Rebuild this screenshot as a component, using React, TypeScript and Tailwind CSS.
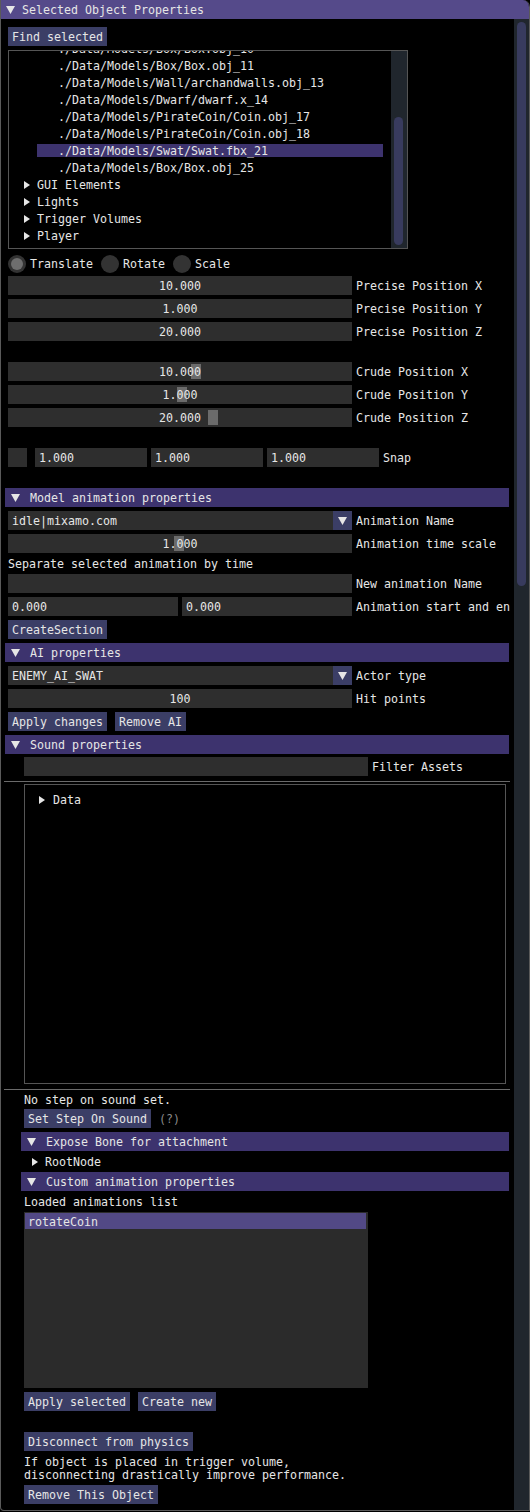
import React from "react";

const FONT = "font-['DejaVu_Sans_Mono',monospace] text-[11.63px] leading-[13px] text-[#e6e6e6] [&_span]:pt-[2px]";

function Down({ className = "" }: { className?: string }) {
  return (
    <svg width="9" height="8" viewBox="0 0 9 8" className={className}>
      <path d="M0 0H9L4.5 8Z" fill="#e6e6e6" />
    </svg>
  );
}

function Right({ className = "" }: { className?: string }) {
  return (
    <svg width="6" height="8" viewBox="0 0 6 8" className={className}>
      <path d="M0 0L6 4L0 8Z" fill="#e6e6e6" />
    </svg>
  );
}

function Header({ label, w = "w-[504px]", mt = "mt-[4px]" }: { label: string; w?: string; mt?: string }) {
  return (
    <div className={`h-[19px] bg-[#3d336e] flex items-center -ml-[3px] shrink-0 ${w} ${mt}`}>
      <Down className="ml-[6px]" />
      <span className="ml-[10px] whitespace-nowrap">{label}</span>
    </div>
  );
}

function Btn({ children, className = "" }: { children: React.ReactNode; className?: string }) {
  return (
    <div className={`h-[19px] px-[4px] bg-[#3b3e66] flex items-center whitespace-nowrap shrink-0 ${className}`}>
      <span>{children}</span>
    </div>
  );
}

function Frame({
  w = "w-[344px]",
  children,
  center = false,
  grab,
  combo = false,
}: {
  w?: string;
  children?: React.ReactNode;
  center?: boolean;
  grab?: number;
  combo?: boolean;
}) {
  return (
    <div className={`relative h-[19px] bg-[#2e2e2e] flex items-center shrink-0 ${w} ${center ? "justify-center" : "pl-[4px]"}`}>
      {grab !== undefined && (
        <div className="absolute top-[2px] h-[15px] w-[10px] bg-[#6b6b6b]" style={{ left: grab }} />
      )}
      <span className="relative whitespace-nowrap">{children}</span>
      {combo && (
        <div className="absolute right-0 top-0 h-[19px] w-[19px] bg-[#3b3e66] flex items-center justify-center">
          <Down />
        </div>
      )}
    </div>
  );
}

function Row({
  value,
  label,
  center = true,
  grab,
  combo = false,
  mt = "mt-[4px]",
}: {
  value: string;
  label: string;
  center?: boolean;
  grab?: number;
  combo?: boolean;
  mt?: string;
}) {
  return (
    <div className={`flex items-center h-[19px] shrink-0 ${mt}`}>
      <Frame center={center} grab={grab} combo={combo}>
        {value}
      </Frame>
      <span className="ml-[4px] whitespace-nowrap">{label}</span>
    </div>
  );
}

function Radio({ label, on = false }: { label: string; on?: boolean }) {
  return (
    <div className="flex items-center gap-[4px]">
      <div className="w-[18px] h-[18px] rounded-full bg-[#333333] flex items-center justify-center">
        {on && <div className="w-[12px] h-[12px] rounded-full bg-[#6e6e6e]" />}
      </div>
      <span>{label}</span>
    </div>
  );
}

const files = [
  "./Data/Models/Box/Box.obj_10",
  "./Data/Models/Box/Box.obj_11",
  "./Data/Models/Wall/archandwalls.obj_13",
  "./Data/Models/Dwarf/dwarf.x_14",
  "./Data/Models/PirateCoin/Coin.obj_17",
  "./Data/Models/PirateCoin/Coin.obj_18",
  "./Data/Models/Swat/Swat.fbx_21",
  "./Data/Models/Box/Box.obj_25",
];

const groups = ["GUI Elements", "Lights", "Trigger Volumes", "Player"];

export default function App() {
  return (
    <div className={`w-[530px] h-[1512px] bg-black overflow-hidden ${FONT}`}>
      <div className="w-[530px] h-[1511px] flex flex-col border-x border-b border-[#5a5a5a] rounded-tr-[7px] rounded-bl-[4px] overflow-hidden">
        {/* title */}
        <div className="h-[19px] bg-[#554a8a] flex items-center shrink-0 -mx-[1px]">
          <Down className="ml-[6px]" />
          <span className="ml-[7px]">Selected Object Properties</span>
        </div>
        <div className="flex flex-1 min-h-0">
          {/* content */}
          <div className="w-[513px] pl-[3px] flex flex-col">
            <div className="w-[506px] pl-[4px] overflow-hidden flex flex-col">
              <Btn className="mt-[8px] self-start">Find selected</Btn>

              {/* tree list */}
              <div className="mt-[4px] w-[400px] h-[199px] border border-[#555555] flex shrink-0">
                <div className="flex-1 overflow-hidden">
                  <div className="-mt-[9px] flex flex-col gap-[4px]">
                    {files.map((f, i) => (
                      <div
                        key={f}
                        className={`ml-[28px] mr-[8px] h-[13px] pl-[21px] pt-[1px] whitespace-nowrap ${i === 6 ? "bg-[#3d336e]" : ""}`}
                      >
                        {f}
                      </div>
                    ))}
                    {groups.map((g) => (
                      <div key={g} className="h-[13px] flex items-center pl-[15px]">
                        <Right />
                        <span className="ml-[7px]">{g}</span>
                      </div>
                    ))}
                  </div>
                </div>
                <div className="w-[16px] bg-[#20262d] flex flex-col">
                  <div className="mt-[66px] ml-[3px] w-[9px] h-[128px] rounded-full bg-[#383b5e]" />
                </div>
              </div>

              {/* radios */}
              <div className="mt-[5px] h-[19px] flex items-center gap-[8px] shrink-0">
                <Radio label="Translate" on />
                <Radio label="Rotate" />
                <Radio label="Scale" />
              </div>

              <Row value="10.000" label="Precise Position X" mt="mt-[3px]" />
              <Row value="1.000" label="Precise Position Y" />
              <Row value="20.000" label="Precise Position Z" />

              <Row value="10.000" label="Crude Position X" grab={183} mt="mt-[21px]" />
              <Row value="1.000" label="Crude Position Y" grab={169} />
              <Row value="20.000" label="Crude Position Z" grab={200} />

              <div className="mt-[21px] h-[19px] flex items-center shrink-0">
                <div className="w-[19px] h-[19px] bg-[#2e2e2e]" />
                <div className="ml-[8px]">
                  <Frame w="w-[112px]">1.000</Frame>
                </div>
                <div className="ml-[4px]">
                  <Frame w="w-[112px]">1.000</Frame>
                </div>
                <div className="ml-[4px]">
                  <Frame w="w-[112px]">1.000</Frame>
                </div>
                <span className="ml-[4px]">Snap</span>
              </div>

              <Header label="Model animation properties" mt="mt-[21px]" />
              <Row value="idle|mixamo.com" label="Animation Name" center={false} combo />
              <Row value="1.000" label="Animation time scale" grab={166} />
              <div className="mt-[4px] h-[13px] pt-[1px] whitespace-nowrap shrink-0">Separate selected animation by time</div>
              <Row value="" label="New animation Name" />
              <div className="mt-[4px] h-[19px] flex items-center shrink-0">
                <Frame w="w-[170px]">0.000</Frame>
                <div className="ml-[4px]">
                  <Frame w="w-[170px]">0.000</Frame>
                </div>
                <span className="ml-[4px] whitespace-nowrap">Animation start and end</span>
              </div>
              <Btn className="mt-[4px] self-start">CreateSection</Btn>

              <Header label="AI properties" />
              <Row value="ENEMY_AI_SWAT" label="Actor type" center={false} combo />
              <Row value="100" label="Hit points" />
              <div className="mt-[4px] flex gap-[8px] shrink-0">
                <Btn>Apply changes</Btn>
                <Btn>Remove AI</Btn>
              </div>

              <Header label="Sound properties" />
              <div className="pl-[16px] flex flex-col">
                <div className="mt-[3px] h-[19px] flex items-center shrink-0">
                  <Frame />
                  <span className="ml-[4px]">Filter Assets</span>
                </div>
              </div>
              <div className="mt-[5px] -ml-[4px] w-[506px] h-[1px] bg-[#6a6a6a] shrink-0" />
              <div className="pl-[16px] flex flex-col">
                <div className="mt-[2px] w-[482px] h-[300px] border border-[#555555] shrink-0 pt-[8px]">
                  <div className="h-[13px] flex items-center pl-[14px]">
                    <Right />
                    <span className="ml-[8px]">Data</span>
                  </div>
                </div>
              </div>
              <div className="mt-[5px] -ml-[4px] w-[506px] h-[1px] bg-[#6a6a6a] shrink-0" />
              <div className="pl-[16px] flex flex-col">
                <div className="mt-[3px] h-[13px] pt-[1px] whitespace-nowrap">No step on sound set.</div>
                <div className="mt-[3px] flex items-center">
                  <Btn>Set Step On Sound</Btn>
                  <span className="ml-[8px] text-[#8a8a8a]">(?)</span>
                </div>
                <Header label="Expose Bone for attachment" w="w-[488px]" />
                <div className="mt-[4px] h-[13px] flex items-center pl-[8px]">
                  <Right />
                  <span className="ml-[7px]">RootNode</span>
                </div>
                <Header label="Custom animation properties" w="w-[488px]" />
                <div className="mt-[4px] h-[13px] pt-[1px] whitespace-nowrap">Loaded animations list</div>
                <div className="mt-[4px] w-[344px] h-[176px] bg-[#2b2b2b] pt-[1px] shrink-0">
                  <div className="ml-[1px] w-[341px] h-[16px] bg-[#524985] pl-[3px] flex items-center">
                    <span>rotateCoin</span>
                  </div>
                </div>
                <div className="mt-[4px] flex gap-[8px]">
                  <Btn>Apply selected</Btn>
                  <Btn>Create new</Btn>
                </div>
                <Btn className="mt-[21px] self-start">Disconnect from physics</Btn>
                <div className="mt-[4px] pt-[1px] whitespace-nowrap">
                  <div className="h-[13px]">If object is placed in trigger volume,</div>
                  <div className="h-[13px]">disconnecting drastically improve performance.</div>
                </div>
                <Btn className="mt-[3px] self-start">Remove This Object</Btn>
              </div>
            </div>
          </div>
          {/* scrollbar */}
          <div className="w-[15px] bg-[#20262d] flex flex-col">
            <div className="mt-[3px] ml-[3px] w-[9px] h-[564px] rounded-full bg-[#383b5e]" />
          </div>
        </div>
      </div>
    </div>
  );
}
